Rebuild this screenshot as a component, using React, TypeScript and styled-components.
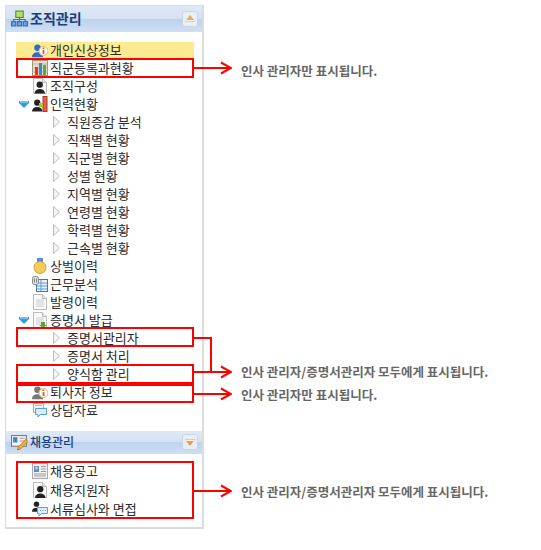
import React from "react";
import styled, { createGlobalStyle } from "styled-components";

const GlobalStyle = createGlobalStyle`
  html, body { margin: 0; padding: 0; background: #fff; }
  body { font-family: "Noto Sans CJK KR", "Noto Sans", sans-serif; }
`;

/* icons, all drawn on a 16x16 grid */
const Svg = styled.svg`
  width: 16px;
  height: 16px;
  flex: none;
  display: block;
`;

const Person = ({ x = 0, y = 0, fill = "#222", scale = 1 }: { x?: number; y?: number; fill?: string; scale?: number }) => (
  <g transform={`translate(${x} ${y}) scale(${scale})`} fill={fill}>
    <circle cx="5" cy="3.500" r="3" />
    <path d="M0 12c0-3 2-4.500 5-4.500s5 1.500 5 4.500z" />
  </g>
);

const Page = ({ lines = true }: { lines?: boolean }) => (
  <>
    <path d="M1.500.5h9l4 4v11h-13z" fill="#fafafa" stroke="#bbb" />
    <path d="M10.500.5v4h4" fill="#e8e8e8" stroke="#bbb" />
    {lines && <path d="M4 6h8M4 8h8M4 10h8M4 12h8" stroke="#ccc" />}
  </>
);

const icons: Record<string, React.ReactNode> = {
  info: (
    <>
      <Person x={0} y={2} fill="#2a6fc4" scale={1.1} />
      <circle cx="11.500" cy="9" r="4.500" fill="#fff" stroke="#efb060" />
      <path d="M11.500 5.500v1.500M11.500 8v4" stroke="#d9601a" strokeWidth="1.800" />
    </>
  ),
  chart: (
    <>
      <rect x="0.500" y="0.500" width="15" height="15" fill="#e9dccb" stroke="#a8927a" />
      <path d="M1 4h14M1 8h14M1 12h14" stroke="#cbb9a2" />
      <rect x="3" y="7" width="3" height="8" fill="#d8392b" />
      <rect x="7" y="3" width="3" height="12" fill="#2e8fd0" />
      <rect x="11" y="5" width="3" height="10" fill="#4faf4a" />
    </>
  ),
  person: (
    <>
      <Page lines={false} />
      <Person x={2.500} y={3} fill="#222" scale={1.050} />
    </>
  ),
  staff: (
    <>
      <Person x={0} y={3} fill="#222" scale={1.050} />
      <rect x="11" y="0.500" width="4" height="15" fill="#e8604a" stroke="#a83a28" />
      <path d="M7 7h4v4H7z" fill="#9ccc30" />
    </>
  ),
  medal: (
    <>
      <rect x="5" y="0" width="6" height="5" fill="#5b8fc8" />
      <circle cx="8" cy="9.500" r="6" fill="#f6cc58" stroke="#d0a038" />
    </>
  ),
  table: (
    <>
      <rect x="4.500" y="3.500" width="11" height="12" fill="#eaf2fb" stroke="#3a78c0" />
      <path d="M5 7h10M5 10h10M5 13h10M9 4v11" stroke="#5a9ad8" />
      <rect x="0.500" y="0.500" width="6" height="8" rx="2" fill="#ddd" stroke="#888" />
      <path d="M2.500 2.500v4M4.500 2.500v4" stroke="#888" />
    </>
  ),
  doc: <Page />,
  docDown: (
    <>
      <Page />
      <path d="M9 10h4v3h2l-4 3-4-3h2z" fill="#4faa3a" />
    </>
  ),
  retired: (
    <>
      <Person x={0} y={2} fill="#777" scale={1.1} />
      <circle cx="11.500" cy="9" r="4.500" fill="#fff" stroke="#efb060" />
      <path d="M11.500 5.500v1.500M11.500 8v4" stroke="#d9601a" strokeWidth="1.800" />
    </>
  ),
  counsel: (
    <>
      <path d="M1.500 1.500h10v9h-10z" fill="#f3f3f3" stroke="#aaa" />
      <path d="M3 3.500h7" stroke="#bbb" />
      <path d="M3.500 6.500h11v6h-6l-2.500 2.500v-2.500h-2.500z" fill="#d8ecfa" stroke="#5a9ed0" />
    </>
  ),
  notice: (
    <>
      <rect x="0.500" y="0.500" width="15" height="15" fill="#f2f2f2" stroke="#aaa" />
      <rect x="2" y="3" width="5" height="6" fill="#5a8fd0" />
      <circle cx="4.500" cy="5" r="1.500" fill="#f0c090" />
      <path d="M9 3.500h5M9 6h5M9 8.500h5M2 11h12M2 13h12" stroke="#9a9a9a" />
    </>
  ),
  applicant: (
    <>
      <Page lines={false} />
      <Person x={3} y={3.500} fill="#222" scale={1.050} />
    </>
  ),
  review: (
    <>
      <Person x={0} y={0} fill="#222" scale={0.9} />
      <path d="M5.500 6.500h10v6h-6l-2.500 2.500v-2.500h-1.500z" fill="#dcefff" stroke="#5a9ed0" />
      <path d="M8 9.500h1M10.500 9.500h1M13 9.500h1" stroke="#5a9ed0" />
    </>
  ),
};

const OrgIcon = () => (
  <HeaderSvg viewBox="0 0 16 16">
    <rect x="4.500" y="1" width="7" height="6" fill="#b7df6a" stroke="#4f8a20" />
    <path d="M8 7v2M2.500 11V9h11v2M8 9v2" stroke="#3a70b0" fill="none" />
    <rect x="0.500" y="11" width="4" height="4" fill="#6aa8e0" stroke="#2a68b0" />
    <rect x="6" y="11" width="4" height="4" fill="#6aa8e0" stroke="#2a68b0" />
    <rect x="11.500" y="11" width="4" height="4" fill="#6aa8e0" stroke="#2a68b0" />
  </HeaderSvg>
);

const RecruitIcon = () => (
  <HeaderSvg viewBox="0 0 16 16">
    <rect x="0.500" y="1.500" width="14" height="10" fill="#f6f6f6" stroke="#777" />
    <rect x="2" y="3" width="4" height="5" fill="#4a80c8" />
    <path d="M8 4h5M8 6.500h5" stroke="#999" />
    <path d="M6 15l1-3 7-7 2 2-7 7z" fill="#f0b040" stroke="#a86a18" strokeWidth="0.700" />
  </HeaderSvg>
);

type Row = { label: string; icon?: string; open?: boolean; active?: boolean };

const orgRows: Row[] = [
  { label: "개인신상정보", icon: "info", active: true },
  { label: "직군등록과현황", icon: "chart" },
  { label: "조직구성", icon: "person" },
  { label: "인력현황", icon: "staff", open: true },
  { label: "직원증감 분석" },
  { label: "직책별 현황" },
  { label: "직군별 현황" },
  { label: "성별 현황" },
  { label: "지역별 현황" },
  { label: "연령별 현황" },
  { label: "학력별 현황" },
  { label: "근속별 현황" },
  { label: "상벌이력", icon: "medal" },
  { label: "근무분석", icon: "table" },
  { label: "발령이력", icon: "doc" },
  { label: "증명서 발급", icon: "docDown", open: true },
  { label: "증명서관리자" },
  { label: "증명서 처리" },
  { label: "양식함 관리" },
  { label: "퇴사자 정보", icon: "retired" },
  { label: "상담자료", icon: "counsel" },
];

const recruitRows: Row[] = [
  { label: "채용공고", icon: "notice" },
  { label: "채용지원자", icon: "applicant" },
  { label: "서류심사와 면접", icon: "review" },
];

function MenuRows({ rows }: { rows: Row[] }) {
  return (
    <>
      {rows.map((row) =>
        row.icon ? (
          <Item key={row.label} $active={row.active}>
            <Toggle>{row.open && <OpenMark viewBox="0 0 10 7"><path d="M0 0h10v2L5 7 0 2z" fill="#2f9be0" /><path d="M1 1h8" stroke="#bfe6fb" /></OpenMark>}</Toggle>
            <Svg viewBox="0 0 16 16">{icons[row.icon]}</Svg>
            <Label>{row.label}</Label>
          </Item>
        ) : (
          <SubItem key={row.label}>
            <SubMark viewBox="0 0 7 12"><path d="M.5.500l6 5.500-6 5.500z" fill="#f4f4f4" stroke="#bdbdbd" /></SubMark>
            <Label>{row.label}</Label>
          </SubItem>
        )
      )}
    </>
  );
}

function Arrow({ top, left, width }: { top: number; left: number; width: number }) {
  return (
    <ArrowSvg style={{ top, left, width }} height="14" viewBox={`0 0 ${width} 14`}>
      <path d={`M0 7H${width - 1}M${width - 11} 1.500L${width - 1} 7l-10 5.500`} fill="none" stroke="#f00" strokeWidth="2" />
    </ArrowSvg>
  );
}

export default function App() {
  return (
    <Canvas>
      <GlobalStyle />
      <Panel>
        <Section>
          <SectionHeader $height={26}>
            <OrgIcon />
            <Title $bold>조직관리</Title>
            <Collapse>
              <svg width="10" height="7" viewBox="0 0 10 7"><path d="M0 6.500L5 0l5 6.500z" fill="#e6a868" /><path d="M1 5.500h8" stroke="#fff2dd" /></svg>
            </Collapse>
          </SectionHeader>
          <MenuList $height={399} $top={9} $row={18}>
            <MenuRows rows={orgRows} />
          </MenuList>
        </Section>
        <Section>
          <SectionHeader $height={23}>
            <RecruitIcon />
            <Title>채용관리</Title>
            <Collapse>
              <svg width="10" height="7" viewBox="0 0 10 7"><path d="M0 .5L5 7l5-6.500z" fill="#ee9a50" /><path d="M1 1.500h8" stroke="#fff2dd" /></svg>
            </Collapse>
          </SectionHeader>
          <MenuList $height={73} $top={7} $row={19}>
            <MenuRows rows={recruitRows} />
          </MenuList>
        </Section>
      </Panel>

      <Mark $top={58} $height={20} />
      <Mark $top={327} $height={20} />
      <Mark $top={364} $height={20} />
      <Mark $top={384} $height={19} />
      <Mark $top={461} $height={58} />

      <Arrow top={61} left={193} width={39} />
      <Arrow top={365} left={193} width={39} />
      <Arrow top={387} left={193} width={39} />
      <Arrow top={484} left={193} width={39} />
      <Bracket width="19" height="36" viewBox="0 0 19 36">
        <path d="M0 1h18v35" fill="none" stroke="#f00" strokeWidth="2" />
      </Bracket>

      <Note $top={63}>인사 관리자만 표시됩니다.</Note>
      <Note $top={364}>인사 관리자/증명서관리자 모두에게 표시됩니다.</Note>
      <Note $top={387}>인사 관리자만 표시됩니다.</Note>
      <Note $top={484}>인사 관리자/증명서관리자 모두에게 표시됩니다.</Note>
    </Canvas>
  );
}

const HeaderSvg = styled.svg`
  width: 17px;
  height: 17px;
  flex: none;
`;

const Canvas = styled.div`
  position: relative;
  width: 541px;
  height: 550px;
  padding: 5px 0 0 5px;
  box-sizing: border-box;
  overflow: hidden;
`;

const Panel = styled.div`
  width: 199px;
  border: 1px solid #dcdcdc;
  border-width: 1px 2px 2px 1px;
  box-sizing: border-box;
`;

const Section = styled.section`
  display: flex;
  flex-direction: column;
`;

const SectionHeader = styled.header<{ $height: number }>`
  height: ${(p) => p.$height}px;
  box-sizing: border-box;
  display: flex;
  align-items: center;
  padding: 0 4px 1px 5px;
  gap: 2px;
  background: linear-gradient(#dfe9f6 0%, #d5e2f3 48%, #bdd2ee 50%, #cfdff4 100%);
`;

const Title = styled.h2<{ $bold?: boolean }>`
  margin: 0 0 ${(p) => (p.$bold ? 2 : 0)}px;
  flex: 1;
  font-size: ${(p) => (p.$bold ? 14 : 12)}px;
  font-weight: ${(p) => (p.$bold ? 700 : 500)};
  color: #17407e;
  line-height: 18px;
`;

const Collapse = styled.span`
  width: 14px;
  height: 14px;
  display: flex;
  align-items: center;
  justify-content: center;
  background: #e8eef6;
  border: 1px solid #ccd6e2;
  border-radius: 3px;
`;

const MenuList = styled.ul<{ $height: number; $top: number; $row: number }>`
  list-style: none;
  margin: 0;
  padding: ${(p) => p.$top}px 8px 0 10px;
  height: ${(p) => p.$height}px;
  box-sizing: border-box;

  & > li {
    height: ${(p) => p.$row}px;
  }
`;

const Item = styled.li<{ $active?: boolean }>`
  display: flex;
  align-items: center;
  background: ${(p) => (p.$active ? "linear-gradient(transparent 1px, #fdeb91 1px)" : "transparent")};
`;

const SubItem = styled.li`
  display: flex;
  align-items: center;
  padding-left: 37px;
  gap: 5px;
`;

const Toggle = styled.span`
  width: 16px;
  flex: none;
  display: flex;
  padding-left: 3px;
  box-sizing: border-box;
`;

const OpenMark = styled.svg`
  width: 10px;
  height: 7px;
`;

const SubMark = styled.svg`
  width: 7px;
  height: 12px;
  flex: none;
`;

const Label = styled.span`
  margin-left: 2px;
  font-size: 13px;
  line-height: 18px;
  color: #2b2b2b;
  white-space: nowrap;
`;

const Mark = styled.div<{ $top: number; $height: number }>`
  position: absolute;
  left: 16px;
  top: ${(p) => p.$top}px;
  width: 178px;
  height: ${(p) => p.$height}px;
  box-sizing: border-box;
  border: 2px solid #f00;
`;

const ArrowSvg = styled.svg`
  position: absolute;
  display: block;
`;

const Bracket = styled.svg`
  position: absolute;
  left: 193px;
  top: 337px;
`;

const Note = styled.p<{ $top: number }>`
  position: absolute;
  left: 241px;
  top: ${(p) => p.$top}px;
  margin: 0;
  font-size: 12.5px;
  font-weight: 700;
  line-height: 16px;
  color: #666;
  white-space: nowrap;
`;
